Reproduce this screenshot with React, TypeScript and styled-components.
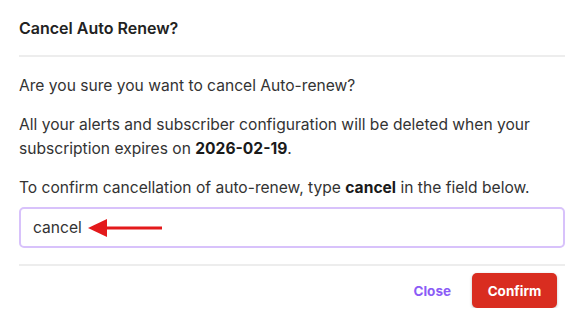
import styled, { createGlobalStyle } from "styled-components";

const GlobalStyle = createGlobalStyle`
  body {
    margin: 0;
    background: #ffffff;
    font-family: Inter, "Liberation Sans", sans-serif;
    color: #2b2b2b;
  }
`;

const Modal = styled.div`
  width: 583px;
  box-sizing: border-box;
  padding: 0 18px 0 19px;
`;

const Header = styled.div`
  padding: 18px 0 17px;
  border-bottom: 2px solid #ededed;
`;

const Title = styled.h3`
  margin: 0;
  font-size: 16px;
  font-weight: 600;
  line-height: 20px;
  color: #222;
`;

const Body = styled.div`
  display: flex;
  flex-direction: column;
  gap: 15px;
  padding: 17px 0 16px;
  border-bottom: 2px solid #ededed;
`;

const Paragraph = styled.p`
  margin: 0;
  font-size: 15.6px;
  line-height: 24px;
  color: #333;

  strong {
    font-weight: 700;
    color: #1a1a1a;
  }
`;

const Field = styled.div`
  margin-top: -8px;
  height: 41px;
  box-sizing: border-box;
  border: 2px solid #d8c2fb;
  border-radius: 5px;
  display: flex;
  align-items: center;
  padding-left: 12px;
  font-size: 15.6px;
  color: #333;
`;

const Arrow = styled.svg`
  margin-left: 6px;
`;

const Footer = styled.div`
  display: flex;
  justify-content: flex-end;
  align-items: center;
  gap: 21px;
  padding: 7px 8px 0 0;
`;

const TextButton = styled.button`
  border: none;
  background: none;
  padding: 0;
  font-family: inherit;
  font-size: 13.5px;
  font-weight: 700;
  color: #8b5cf6;
  cursor: pointer;
`;

const DangerButton = styled.button`
  width: 85px;
  height: 35px;
  border: none;
  border-radius: 5px;
  background: #d92d20;
  color: #fff;
  font-family: inherit;
  font-size: 13.5px;
  font-weight: 700;
  box-shadow: 0 1px 3px rgba(0, 0, 0, 0.25);
  cursor: pointer;
`;

export default function App() {
  return (
    <>
      <GlobalStyle />
      <Modal>
        <Header>
          <Title>Cancel Auto Renew?</Title>
        </Header>
        <Body>
          <Paragraph>Are you sure you want to cancel Auto-renew?</Paragraph>
          <Paragraph>
            All your alerts and subscriber configuration will be deleted when your
            subscription expires on <strong>2026-02-19</strong>.
          </Paragraph>
          <Paragraph>
            To confirm cancellation of auto-renew, type <strong>cancel</strong> in the
            field below.
          </Paragraph>
          <Field>
            cancel
            <Arrow width="74" height="18" viewBox="0 0 74 18">
              <polygon points="0,9 19,0 19,18" fill="#e3191b" />
              <rect x="17" y="7.5" width="57" height="3" fill="#e3191b" />
            </Arrow>
          </Field>
        </Body>
        <Footer>
          <TextButton>Close</TextButton>
          <DangerButton>Confirm</DangerButton>
        </Footer>
      </Modal>
    </>
  );
}
